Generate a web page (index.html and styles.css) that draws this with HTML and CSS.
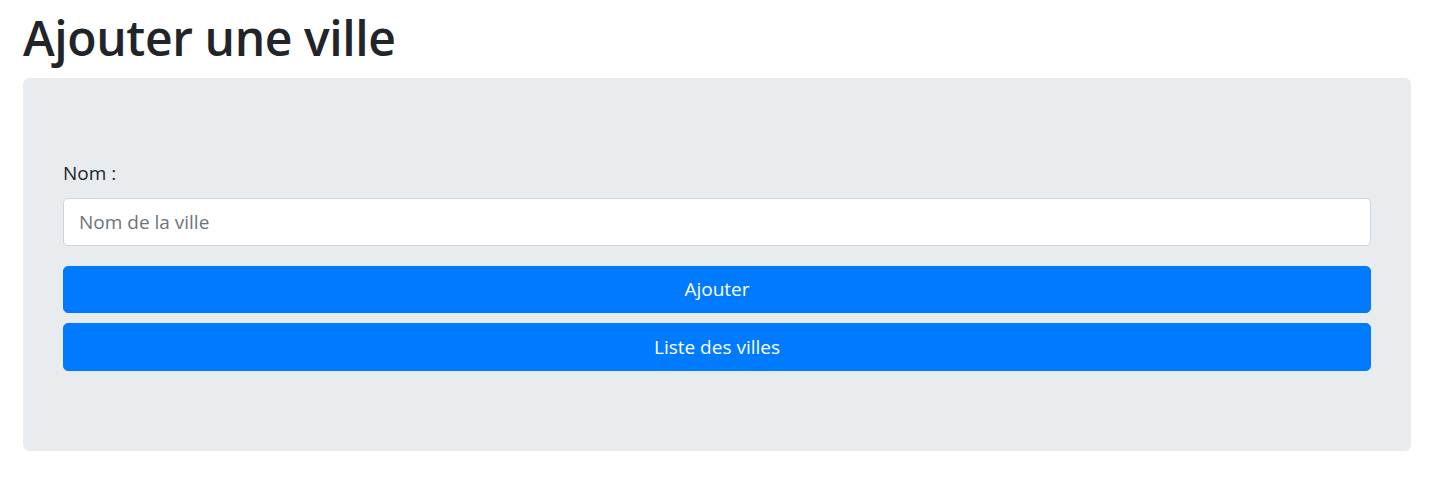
FILE: index.html
```html
<!DOCTYPE html>
<html lang="fr">
<head>
<meta charset="utf-8">
<title>Ajouter une ville</title>
<link rel="stylesheet" href="styles.css">
</head>
<body>
<div class="page">
  <h1 class="title">Ajouter une ville</h1>
  <div class="jumbotron">
    <form class="form">
      <div class="form-group">
        <label class="label" for="nom">Nom :</label>
        <input class="input" id="nom" type="text" placeholder="Nom de la ville">
      </div>
      <button class="btn" type="button">Ajouter</button>
      <button class="btn btn-second" type="button">Liste des villes</button>
    </form>
  </div>
</div>
</body>
</html>
```
FILE: styles.css
```css
* { box-sizing: border-box; }
html, body { margin: 0; padding: 0; background: #fff; }
body {
  font-family: "Open Sans", "Noto Sans", sans-serif;
  color: #212529;
  font-size: 20px;
}
.page {
  padding: 8px 31px 0 23px;
}
.title {
  margin: 0 0 10px;
  font-size: 48px;
  line-height: 60px;
  font-weight: 600;
  color: #212529;
  letter-spacing: -0.4px;
}
.jumbotron {
  background: #e9ecef;
  border-radius: 6px;
  padding: 80px 40px;
}
.form { display: flex; flex-direction: column; }
.form-group {
  display: flex;
  flex-direction: column;
  margin-bottom: 20px;
}
.label {
  font-size: 19px;
  line-height: 30px;
  margin-bottom: 10px;
  color: #212529;
}
.input {
  height: 47.5px;
  border: 1px solid #ced4da;
  border-radius: 5px;
  background: #fff;
  padding: 7px 15px;
  font-family: inherit;
  font-size: 19px;
  color: #495057;
}
.input::placeholder { color: #6c757d; }
.btn {
  height: 47.5px;
  border: 1px solid #007bff;
  background: #007bff;
  color: #fff;
  border-radius: 5px;
  font-family: inherit;
  font-size: 19px;
  line-height: 30px;
  padding: 0;
}
.btn-second { margin-top: 10px; }
```
